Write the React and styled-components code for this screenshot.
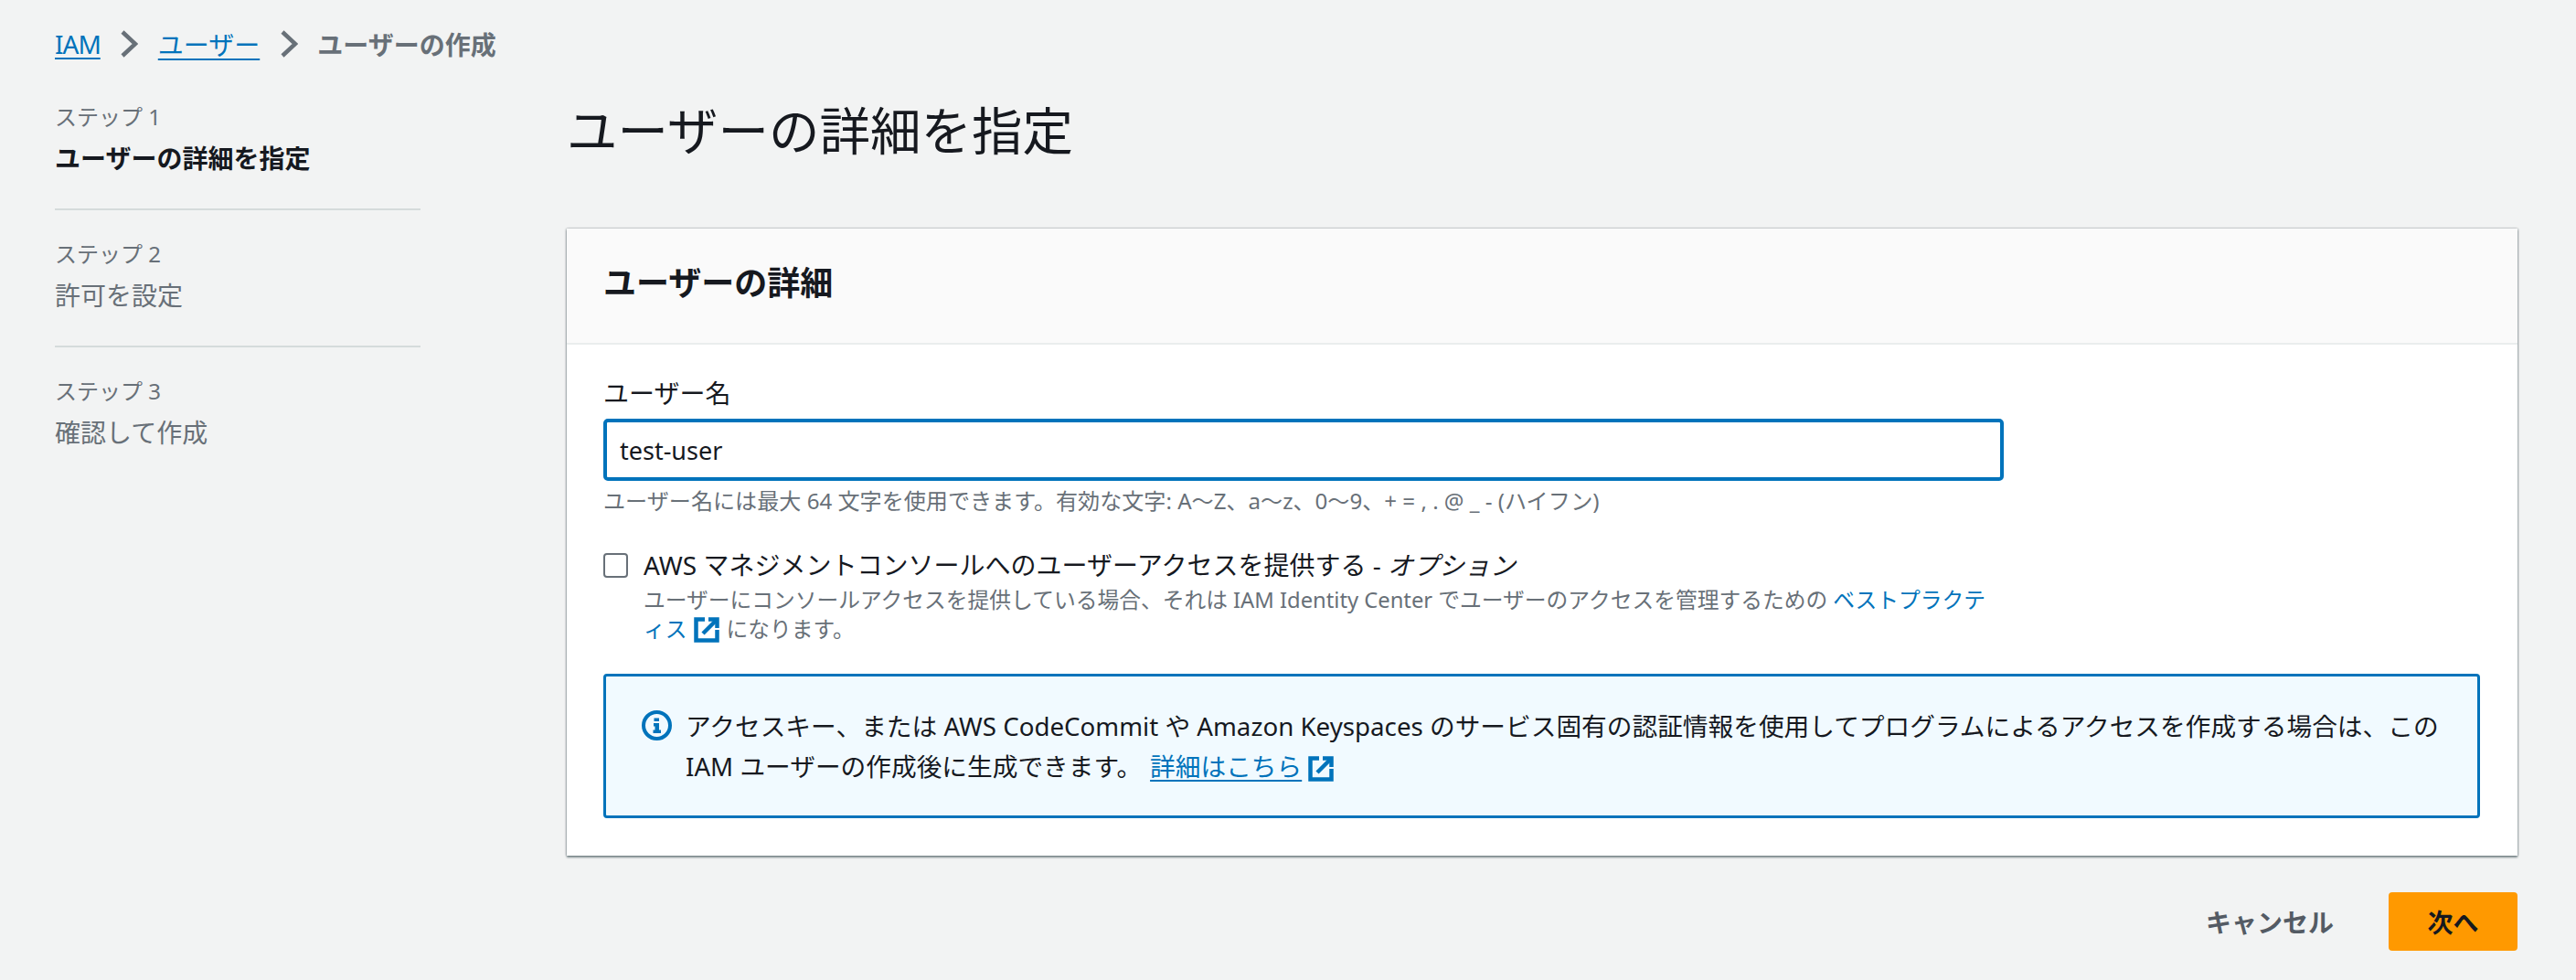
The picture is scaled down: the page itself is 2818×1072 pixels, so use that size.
import React from "react";
import styled, { createGlobalStyle } from "styled-components";

const GlobalStyle = createGlobalStyle`
    html, body {
        margin: 0;
        background-color: #f2f3f3;
    }
    body {
        font-family: "Noto Sans", "Noto Sans CJK JP", sans-serif;
        color: #16191f;
    }
`;

const Page = styled.div`
    padding: 28px 64px 0 60px;
    height: 1072px;
    box-sizing: border-box;
    overflow: hidden;
`;

const Breadcrumbs = styled.nav`
    display: flex;
    align-items: center;
    height: 40px;
    font-size: 28px;
`;

const CrumbLink = styled.a`
    color: #0073bb;
    text-decoration: underline;
    text-underline-offset: 4px;
    letter-spacing: ${(p) => (p.$tight ? "-1px" : "normal")};
`;

const CrumbCurrent = styled.span`
    color: #687078;
    font-weight: 700;
`;

const CrumbSep = styled.svg`
    width: 20px;
    height: 34px;
    margin: 0 21.5px;
    fill: none;
    stroke: #687078;
    stroke-width: 4.5;
`;

const Layout = styled.div`
    display: grid;
    grid-template-columns: 400px 1fr;
    column-gap: 160px;
    padding-top: 2px;
`;

const Steps = styled.ol`
    list-style: none;
    margin: 40px 0 0;
    padding: 0;
`;

const Step = styled.li`
    padding: 30px 0 33px;
    border-bottom: 2px solid #d5dbdb;
    &:first-child {
        padding-top: 0;
    }
    &:last-child {
        border-bottom: none;
    }
`;

const StepLabel = styled.div`
    font-size: 24px;
    line-height: 36px;
    color: #687078;
`;

const StepName = styled.div`
    margin-top: 5px;
    font-size: 28px;
    line-height: 44px;
    color: ${(p) => (p.$active ? "#16191f" : "#687078")};
    font-weight: ${(p) => (p.$active ? 700 : 400)};
`;

const Main = styled.main`
    padding-top: 37px;
`;

const Title = styled.h1`
    margin: 0 0 71px;
    font-size: 55.5px;
    line-height: 72px;
    font-weight: 400;
`;

const Card = styled.section`
    background-color: #fff;
    box-shadow: 0 2px 2px rgba(0, 28, 36, 0.45), 0 -1px 1px rgba(0, 28, 36, 0.03), 1px 0 2px rgba(0, 28, 36, 0.22), -1px 0 2px rgba(0, 28, 36, 0.22);
`;

const CardHeader = styled.header`
    display: flex;
    align-items: center;
    height: 127px;
    padding: 0 40px 10px;
    box-sizing: border-box;
    background-color: #fafafa;
    border-bottom: 2px solid #eaeded;
`;

const CardTitle = styled.h2`
    margin: 0;
    font-size: 36px;
    font-weight: 700;
`;

const CardBody = styled.div`
    padding: 35px 41px 41px 40px;
`;

const FieldLabel = styled.label`
    display: block;
    font-size: 28px;
    line-height: 36px;
`;

const TextInput = styled.input`
    display: block;
    width: 1532px;
    height: 68px;
    margin-top: 10px;
    padding: 0 14px;
    box-sizing: border-box;
    border: 4px solid #0073bb;
    border-radius: 5px;
    outline: none;
    background-color: #fff;
    font-family: inherit;
    font-size: 27px;
    color: #16191f;
`;

const Hint = styled.div`
    margin-top: 6px;
    font-size: 24.1px;
    line-height: 32px;
    color: #687078;
`;

const CheckRow = styled.div`
    display: flex;
    margin-top: 36px;
    width: 1532px;
`;

const CheckBox = styled.input.attrs({ type: "checkbox" })`
    appearance: none;
    flex: none;
    width: 27px;
    height: 27px;
    margin: 5px 17px 0 0;
    box-sizing: border-box;
    border: 2.5px solid #687078;
    border-radius: 4px;
    background-color: #fff;
`;

const CheckText = styled.div`
    flex: 1;
`;

const CheckLabel = styled.div`
    font-size: 28px;
    line-height: 36px;
`;

const CheckDesc = styled.div`
    margin-top: 4px;
    font-size: 23.75px;
    line-height: 32px;
    color: #687078;
`;

const InlineLink = styled.a`
    color: #0073bb;
`;

const ExternalIcon = styled.svg`
    display: inline-block;
    vertical-align: -6px;
    width: 28px;
    height: 28px;
    margin: 0 8px 0 7px;
    fill: none;
    stroke: #0073bb;
    stroke-width: 4.5;
`;

const Alert = styled.div`
    display: flex;
    margin-top: 33px;
    padding: 32px 20px 32px 39px;
    box-sizing: border-box;
    height: 158px;
    background-color: #f1faff;
    border: 3px solid #0073bb;
    border-radius: 4px;
`;

const AlertIcon = styled.svg`
    flex: none;
    width: 33px;
    height: 33px;
    margin: 5px 15px 0 0;
`;

const AlertText = styled.div`
    font-size: 27.7px;
    line-height: 44px;
`;

const AlertLink = styled.a`
    color: #0073bb;
    text-decoration: underline;
    text-underline-offset: 4px;
    margin-left: 9px;
`;

const Actions = styled.div`
    display: flex;
    justify-content: flex-end;
    align-items: center;
    margin-top: 40px;
`;

const CancelButton = styled.button`
    border: none;
    background: none;
    padding: 0;
    margin-right: 60px;
    font-family: inherit;
    font-size: 28px;
    font-weight: 700;
    color: #545b64;
`;

const PrimaryButton = styled.button`
    width: 141px;
    height: 64px;
    border: none;
    border-radius: 4px;
    background-color: #ff9900;
    font-family: inherit;
    font-size: 28px;
    font-weight: 700;
    color: #16191f;
`;

const Chevron = () => (
    <CrumbSep viewBox="0 0 20 34">
        <path d="M3 4l14 13L3 30" />
    </CrumbSep>
);

const External = () => (
    <ExternalIcon viewBox="0 0 28 28">
        <path d="M12 2.5H2.5v23h23V14" />
        <path d="M16 2.5h9.5V12" />
        <path d="M25 3L10 18" />
    </ExternalIcon>
);

const steps = [
    { label: "ステップ 1", name: "ユーザーの詳細を指定", active: true },
    { label: "ステップ 2", name: "許可を設定" },
    { label: "ステップ 3", name: "確認して作成" },
];

const App = () => {
    return (
        <Page>
            <GlobalStyle />
            <Breadcrumbs>
                <CrumbLink $tight>IAM</CrumbLink>
                <Chevron />
                <CrumbLink>ユーザー</CrumbLink>
                <Chevron />
                <CrumbCurrent>ユーザーの作成</CrumbCurrent>
            </Breadcrumbs>
            <Layout>
                <Steps>
                    {steps.map((step) => (
                        <Step key={step.label}>
                            <StepLabel>{step.label}</StepLabel>
                            <StepName $active={step.active}>{step.name}</StepName>
                        </Step>
                    ))}
                </Steps>
                <Main>
                    <Title>ユーザーの詳細を指定</Title>
                    <Card>
                        <CardHeader>
                            <CardTitle>ユーザーの詳細</CardTitle>
                        </CardHeader>
                        <CardBody>
                            <FieldLabel>ユーザー名</FieldLabel>
                            <TextInput defaultValue="test-user" />
                            <Hint>ユーザー名には最大 64 文字を使用できます。有効な文字: A〜Z、a〜z、0〜9、+ = , . @ _ - (ハイフン)</Hint>
                            <CheckRow>
                                <CheckBox />
                                <CheckText>
                                    <CheckLabel>AWS マネジメントコンソールへのユーザーアクセスを提供する - <i>オプション</i></CheckLabel>
                                    <CheckDesc>
                                        ユーザーにコンソールアクセスを提供している場合、それは IAM Identity Center でユーザーのアクセスを管理するための <InlineLink>ベストプラクティス<External /></InlineLink>になります。
                                    </CheckDesc>
                                </CheckText>
                            </CheckRow>
                            <Alert>
                                <AlertIcon viewBox="0 0 33 33">
                                    <circle cx="16.5" cy="16.5" r="14.5" fill="none" stroke="#0073bb" strokeWidth="4" />
                                    <rect x="13.5" y="8.5" width="5.5" height="3.5" fill="#0073bb" />
                                    <path d="M13 14h6v7.5h2v3.5h-8.5v-3.5h2v-4H13z" fill="#0073bb" />
                                </AlertIcon>
                                <AlertText>
                                    アクセスキー、または AWS CodeCommit や Amazon Keyspaces のサービス固有の認証情報を使用してプログラムによるアクセスを作成する場合は、この<br />
                                    IAM ユーザーの作成後に生成できます。
                                    <AlertLink>詳細はこちら</AlertLink>
                                    <External />
                                </AlertText>
                            </Alert>
                        </CardBody>
                    </Card>
                    <Actions>
                        <CancelButton>キャンセル</CancelButton>
                        <PrimaryButton>次へ</PrimaryButton>
                    </Actions>
                </Main>
            </Layout>
        </Page>
    );
};

export default App;
